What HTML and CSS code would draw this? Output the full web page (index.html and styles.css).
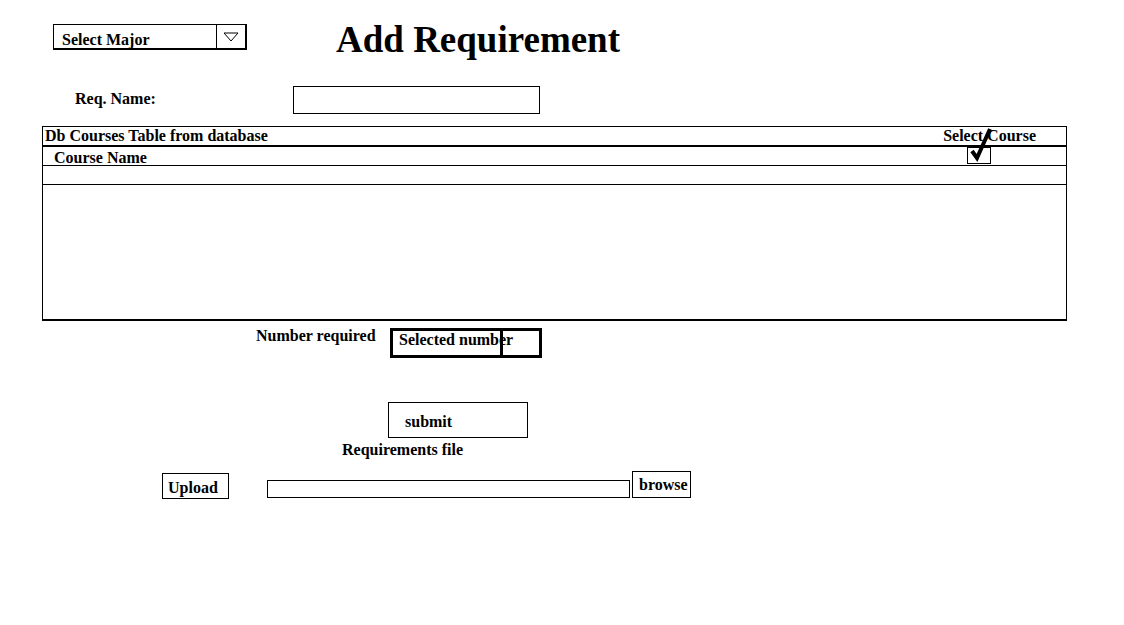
FILE: index.html
```html
<!DOCTYPE html>
<html lang="en">
<head>
    <meta charset="UTF-8">
    <meta name="viewport" content="width=device-width, initial-scale=1.0">
    <title>Add Requirement</title>
    <link rel="stylesheet" href="styles.css">
</head>
<body>
    <div class="page">
        <div class="top-row">
            <div class="major-select">
                <span class="major-label">Select Major</span>
                <span class="major-arrow">
                    <svg width="16" height="10" viewBox="0 0 16 10"><polygon points="1,1 15,1 8,9" fill="none" stroke="#000" stroke-width="1"/></svg>
                </span>
            </div>
            <h1 class="title">Add Requirement</h1>
        </div>

        <div class="req-row">
            <label class="req-label" for="req-name">Req. Name:</label>
            <input type="text" id="req-name" class="req-input">
        </div>

        <div class="courses">
            <div class="courses-head">
                <span>Db Courses Table from database</span>
                <span>Select Course</span>
            </div>
            <div class="courses-row">
                <span>Course Name</span>
                <span class="check-box">
                    <svg class="check-mark" width="26" height="36" viewBox="0 0 26 36"><polyline points="4,23 9,30 22,1" fill="none" stroke="#000" stroke-width="4"/></svg>
                </span>
            </div>
            <div class="courses-row"></div>
            <div class="courses-body"></div>
        </div>

        <div class="num-row">
            <span class="num-label">Number required</span>
            <div class="num-box">
                <span class="num-text">Selected number</span>
                <span class="num-value"></span>
            </div>
        </div>

        <div class="submit-row">
            <button class="btn submit-btn">submit</button>
        </div>

        <div class="file-label">Requirements file</div>

        <div class="upload-row">
            <button class="btn upload-btn">Upload</button>
            <input type="text" class="file-input">
            <button class="btn browse-btn">browse</button>
        </div>
    </div>
</body>
</html>
```

FILE: styles.css
```css
* {
    box-sizing: border-box;
}

body {
    margin: 0;
    padding: 0;
    background: #fff;
    color: #000;
    font-family: 'Liberation Serif', 'Times New Roman', serif;
    font-weight: bold;
    font-size: 16px;
}

.page {
    padding-top: 20px;
}

.top-row {
    display: flex;
    align-items: flex-start;
    padding-left: 53px;
}

.major-select {
    display: flex;
    margin-top: 4px;
    width: 194px;
    height: 26px;
    border: 1px solid #000;
    border-right-width: 2px;
    border-bottom-width: 2px;
}

.major-label {
    flex: 1;
    padding: 6px 0 0 8px;
    line-height: 18px;
}

.major-arrow {
    width: 29px;
    border-left: 1px solid #000;
    display: flex;
    align-items: center;
    justify-content: center;
}

.title {
    margin: 0 0 0 89px;
    font-size: 37px;
    line-height: 40px;
}

.req-row {
    display: flex;
    align-items: flex-start;
    margin-top: 26px;
    padding-left: 75px;
}

.req-label {
    width: 218px;
    margin-top: 4px;
    line-height: 18px;
}

input[type="text"] {
    display: block;
    padding: 0;
    border: 1px solid #000;
    background: #fff;
    outline: none;
}

.req-input {
    width: 247px;
    height: 28px;
}

.courses {
    margin: 12px 0 0 42px;
    width: 1025px;
    border: 1px solid #000;
    border-bottom-width: 2px;
}

.courses-head {
    display: flex;
    justify-content: space-between;
    height: 20px;
    padding: 1px 30px 0 2px;
    line-height: 16px;
    border-bottom: 2px solid #000;
}

.courses-row {
    display: flex;
    align-items: flex-start;
    height: 19px;
    padding: 2px 0 0 11px;
    line-height: 17px;
    border-bottom: 1px solid #000;
}

.courses-body {
    height: 134px;
}

.check-box {
    position: relative;
    margin: -2px 75px 0 auto;
    width: 24px;
    height: 17px;
    border: 1px solid #000;
}

.check-mark {
    position: absolute;
    left: 0;
    top: -20px;
    overflow: visible;
}

.num-row {
    display: flex;
    align-items: flex-start;
    margin-top: 7px;
    padding-left: 256px;
}

.num-label {
    width: 134px;
    margin-top: -1px;
    line-height: 18px;
}

.num-box {
    display: flex;
    width: 152px;
    height: 30px;
    border: 3px solid #000;
}

.num-text {
    width: 110px;
    padding-left: 6px;
    line-height: 18px;
    white-space: nowrap;
    border-right: 3px solid #000;
}

.num-value {
    flex: 1;
}

.btn {
    display: block;
    margin: 0;
    font: inherit;
    color: #000;
    text-align: left;
    line-height: 18px;
    background: #fff;
    border: 1px solid #000;
    border-radius: 0;
}

.submit-row {
    margin-top: 44px;
    padding-left: 388px;
}

.submit-btn {
    width: 140px;
    height: 36px;
    padding: 4px 0 0 16px;
}

.file-label {
    margin-top: 3px;
    padding-left: 342px;
    line-height: 18px;
}

.upload-row {
    display: flex;
    align-items: flex-start;
    margin-top: 12px;
    padding-left: 162px;
}

.upload-btn {
    margin-top: 2px;
    width: 67px;
    height: 26px;
    padding: 3px 0 0 5px;
}

.file-input {
    margin: 9px 0 0 38px;
    width: 363px;
    height: 18px;
}

.browse-btn {
    margin-left: 2px;
    width: 59px;
    height: 27px;
    padding: 0 0 0 6px;
}
```
